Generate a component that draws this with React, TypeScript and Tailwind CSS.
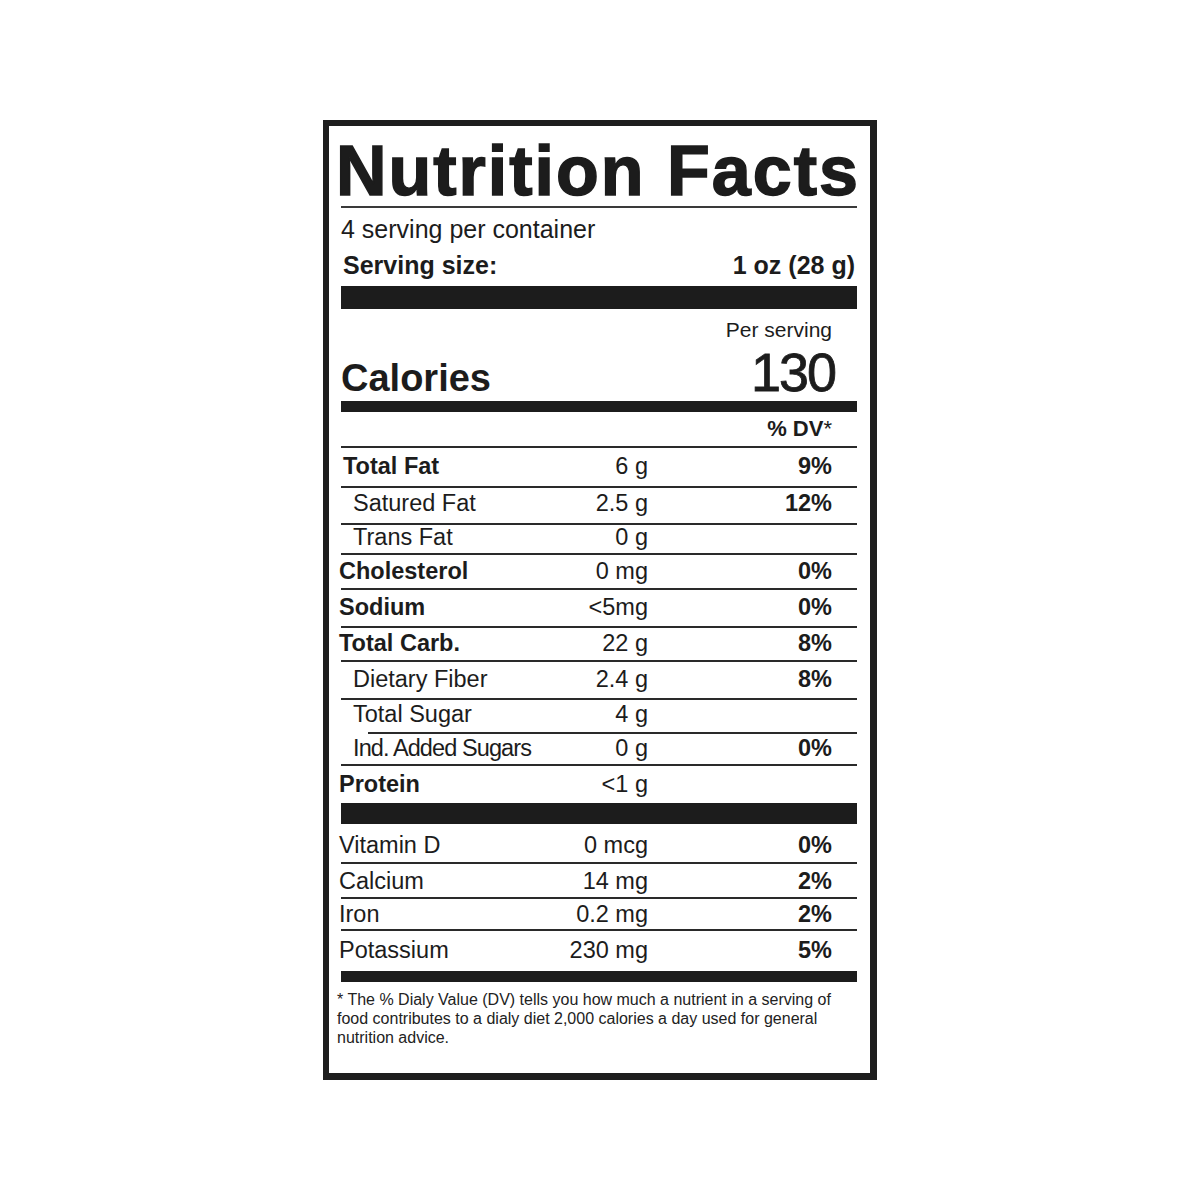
const font = { fontFamily: '"Liberation Sans", Arial, sans-serif' };

type Row = {
  label: string;
  amount: string;
  dv: string;
  bold?: boolean;
  labelClass: string;
  rowClass: string;
  line?: "full" | "short" | "none";
};

const macroRows: Row[] = [
  { label: "Total Fat", amount: "6 g", dv: "9%", bold: true, labelClass: "ml-[2px]", rowClass: "h-[38px]", line: "full" },
  { label: "Satured Fat", amount: "2.5 g", dv: "12%", labelClass: "ml-[12px]", rowClass: "h-[35px] pb-[4px]", line: "full" },
  { label: "Trans Fat", amount: "0 g", dv: "", labelClass: "ml-[12px]", rowClass: "h-[28px] pb-[2px]", line: "full" },
  { label: "Cholesterol", amount: "0 mg", dv: "0%", bold: true, labelClass: "-ml-[2px]", rowClass: "h-[33px]", line: "full" },
  { label: "Sodium", amount: "<5mg", dv: "0%", bold: true, labelClass: "-ml-[2px]", rowClass: "h-[36px]", line: "full" },
  { label: "Total Carb.", amount: "22 g", dv: "8%", bold: true, labelClass: "-ml-[2px]", rowClass: "h-[32px]", line: "full" },
  { label: "Dietary Fiber", amount: "2.4 g", dv: "8%", labelClass: "ml-[12px]", rowClass: "h-[36px]", line: "full" },
  { label: "Total Sugar", amount: "4 g", dv: "", labelClass: "ml-[12px]", rowClass: "h-[32px] pb-[2px]", line: "short" },
  { label: "Ind. Added Sugars", amount: "0 g", dv: "0%", labelClass: "ml-[12px] tracking-[-0.9px]", rowClass: "h-[30px]", line: "full" },
  { label: "Protein", amount: "<1 g", dv: "", bold: true, labelClass: "-ml-[2px]", rowClass: "h-[37px]", line: "none" },
];

const mineralRows: Row[] = [
  { label: "Vitamin D", amount: "0 mcg", dv: "0%", labelClass: "-ml-[2px]", rowClass: "h-[38px] pt-[5px]", line: "full" },
  { label: "Calcium", amount: "14 mg", dv: "2%", labelClass: "-ml-[2px]", rowClass: "h-[33px] pt-[3px]", line: "full" },
  { label: "Iron", amount: "0.2 mg", dv: "2%", labelClass: "-ml-[2px]", rowClass: "h-[30px] pt-[2px]", line: "full" },
  { label: "Potassium", amount: "230 mg", dv: "5%", labelClass: "-ml-[2px]", rowClass: "h-[40px]", line: "none" },
];

const NutrientRow = ({ row }: { row: Row }) => (
  <>
    <div className={`grid grid-cols-[218px_89px_184px] items-center text-[23.5px] leading-none ${row.rowClass}`}>
      <span className={`${row.bold ? "font-bold" : "font-normal"} ${row.labelClass}`}>{row.label}</span>
      <span className="text-right">{row.amount}</span>
      <span className="text-right font-bold">{row.dv}</span>
    </div>
    {row.line === "full" && <div className="h-[2px] bg-[#2a2a2a]" />}
    {row.line === "short" && <div className="ml-[27px] h-[2px] bg-[#2a2a2a]" />}
  </>
);

export default function App() {
  return (
    <div className="flex min-h-[1200px] justify-center bg-white pt-[120px]" style={font}>
      <div className="h-[960px] w-[554px] border-[6px] border-r-[7px] border-b-[7px] border-[#1e1e1e] bg-white pl-[12px] pr-[13px] pt-[10px] text-[#1c1c1c]">
        {/* Title */}
        <h1 className="-ml-[5px] h-[70px] whitespace-nowrap text-[70px] font-bold leading-[70px] tracking-[2px] [-webkit-text-stroke:1.5px_#1c1c1c]">
          Nutrition Facts
        </h1>
        <div className="h-[2px] bg-[#3a3a3a]" />

        {/* Servings */}
        <div className="flex h-[42px] items-center text-[25px] leading-none">4 serving per container</div>
        <div className="flex h-[30px] items-center justify-between text-[25px] font-bold leading-none">
          <span className="ml-[2px]">Serving size:</span>
          <span className="mr-[2px]">1 oz (28 g)</span>
        </div>
        <div className="mt-[6px] h-[23px] bg-[#1c1c1c]" />

        {/* Calories */}
        <div className="flex h-[92px] justify-between">
          <div className="flex items-end pb-[4px]">
            <span className="text-[38px] font-bold leading-none">Calories</span>
          </div>
          <div className="flex flex-col items-end pr-[22px] pt-[10px]">
            <span className="mr-[3px] text-[21px] leading-none">Per serving</span>
            <span className="mt-[5px] text-[54px] leading-none tracking-[-2px] [-webkit-text-stroke:0.8px_#1c1c1c]">130</span>
          </div>
        </div>
        <div className="h-[11px] bg-[#1c1c1c]" />

        <div className="flex h-[34px] items-center justify-end pr-[25px] text-[22px] leading-none">
          <span className="font-bold">% DV</span>
          <span>*</span>
        </div>
        <div className="h-[2px] bg-[#2a2a2a]" />

        {macroRows.map((row) => (
          <NutrientRow key={row.label} row={row} />
        ))}
        <div className="h-[21px] bg-[#1c1c1c]" />

        {mineralRows.map((row) => (
          <NutrientRow key={row.label} row={row} />
        ))}
        <div className="h-[11px] bg-[#1c1c1c]" />

        {/* Footnote */}
        <p className="-ml-[4px] mt-[8px] w-[496px] text-[16px] leading-[19px] text-[#222]">
          * The % Dialy Value (DV) tells you how much a nutrient in a serving of food contributes to a dialy diet 2,000
          calories a day used for general nutrition advice.
        </p>
      </div>
    </div>
  );
}
